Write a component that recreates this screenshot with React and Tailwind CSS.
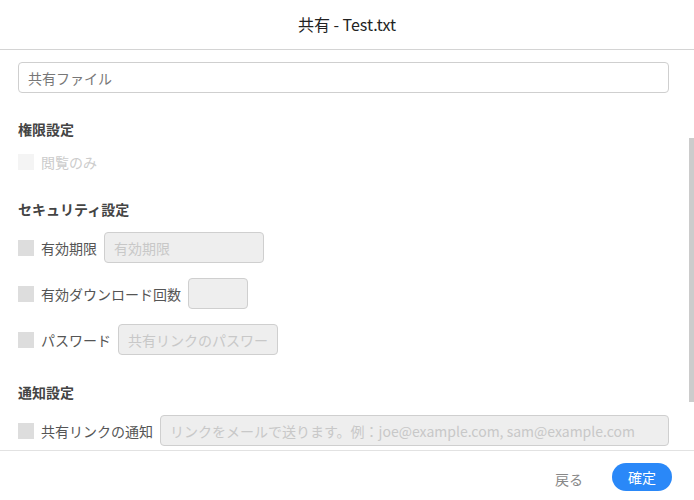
const font = { fontFamily: '"Noto Sans CJK JP", "Noto Sans", sans-serif' };

const Check = ({ disabled }) => (
    <span className={`inline-block w-4 h-4 shrink-0 ${disabled ? "bg-[#f4f4f4]" : "bg-[#dddddd]"}`}></span>
);

const OptionRow = ({ label, placeholder, width }) => (
    <div className="flex items-center h-[31px]">
        <Check />
        <span className="ml-[7px] text-sm text-[#555] whitespace-nowrap">{label}</span>
        <input
            disabled
            placeholder={placeholder}
            className={`ml-[7px] h-[31px] ${width} rounded border border-[#cfcfcf] bg-[#eeeeee] px-[9px] text-sm placeholder:text-[#c8c8c8] outline-none`}
        />
    </div>
);

const App = () => {
    return (
        <div className="relative w-[694px] h-[500px] bg-white flex flex-col overflow-hidden" style={font}>
            <div className="h-[50px] shrink-0 flex items-center justify-center border-b border-[#d4d4d4]">
                <h1 className="text-base text-[#222] -mt-px">共有 - Test.txt</h1>
            </div>

            <div className="h-[400px] shrink-0 overflow-hidden pl-[18px] pr-[25px] pt-3">
                <input
                    placeholder="共有ファイル"
                    className="w-full h-[31px] rounded border border-[#cfcfcf] px-[9px] text-sm placeholder:text-[#777] outline-none"
                />

                <h2 className="mt-[26px] text-sm leading-5 font-bold text-[#444]">権限設定</h2>
                <div className="mt-[13px] flex items-center h-5">
                    <Check disabled />
                    <span className="ml-[7px] text-sm text-[#cccccc]">閲覧のみ</span>
                </div>

                <h2 className="mt-[27px] text-sm leading-5 font-bold text-[#444]">セキュリティ設定</h2>
                <div className="mt-[13px] flex flex-col gap-[15px]">
                    <OptionRow label="有効期限" placeholder="有効期限" width="w-[160px]" />
                    <OptionRow label="有効ダウンロード回数" placeholder="" width="w-[60px]" />
                    <OptionRow label="パスワード" placeholder="共有リンクのパスワード" width="w-[160px]" />
                </div>

                <h2 className="mt-[27px] text-sm leading-5 font-bold text-[#444]">通知設定</h2>
                <div className="mt-[13px]">
                    <OptionRow label="共有リンクの通知" placeholder="リンクをメールで送ります。例：joe@example.com, sam@example.com" width="flex-1 min-w-0" />
                </div>
            </div>

            <div className="flex-1 border-t border-[#e2e2e2] flex items-center justify-end pr-[22px] pt-[3px]">
                <button className="text-sm text-[#888] mr-[29px] pt-[3px]">戻る</button>
                <button className="h-7 w-[60px] rounded-full bg-[#2a88f8] text-sm text-white">確定</button>
            </div>

            <div className="absolute left-[689px] top-[138px] w-[5px] h-[264px] bg-[#cccccc]"></div>
        </div>
    );
};

export default App;
